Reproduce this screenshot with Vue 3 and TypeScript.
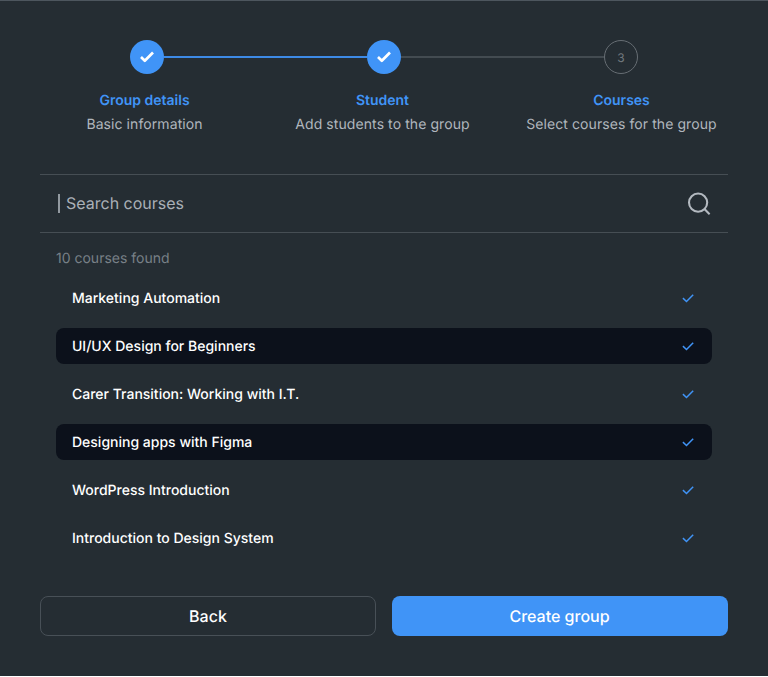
<script setup lang="ts">
import { ref } from 'vue'

interface Step {
  title: string
  description: string
  done: boolean
}

interface Course {
  name: string
  highlighted: boolean
}

const steps: Step[] = [
  { title: 'Group details', description: 'Basic information', done: true },
  { title: 'Student', description: 'Add students to the group', done: true },
  { title: 'Courses', description: 'Select courses for the group', done: false },
]

const courses: Course[] = [
  { name: 'Marketing Automation', highlighted: false },
  { name: 'UI/UX Design for Beginners', highlighted: true },
  { name: 'Carer Transition: Working with I.T.', highlighted: false },
  { name: 'Designing apps with Figma', highlighted: true },
  { name: 'WordPress Introduction', highlighted: false },
  { name: 'Introduction to Design System', highlighted: false },
]

const query = ref('')
</script>

<template>
  <main class="dialog">
    <div class="track">
      <template v-for="(step, i) in steps" :key="step.title">
        <span v-if="i > 0" class="line" :class="{ active: i === 1 }"></span>
        <span class="dot" :class="{ done: step.done }">
          <svg v-if="step.done" width="18" height="18" viewBox="0 0 18 18" fill="none">
            <path d="M3 9.1 6.8 12.7 15 4.5" stroke="#fff" stroke-width="2.7" stroke-linejoin="round" />
          </svg>
          <template v-else>{{ i + 1 }}</template>
        </span>
      </template>
    </div>

    <div class="captions">
      <div v-for="step in steps" :key="step.title" class="caption">
        <strong>{{ step.title }}</strong>
        <span>{{ step.description }}</span>
      </div>
    </div>

    <label class="search">
      <span class="caret"></span>
      <input v-model="query" type="text" placeholder="Search courses" />
      <svg width="24" height="24" viewBox="0 0 24 24" fill="none" stroke="#b3b9c0" stroke-width="2.1">
        <circle cx="11.1" cy="10.6" r="9.1" />
        <path d="M17.2 16.8 22.6 22.2" />
      </svg>
    </label>

    <p class="count">10 courses found</p>

    <ul class="courses">
      <li v-for="course in courses" :key="course.name" :class="{ highlighted: course.highlighted }">
        <span>{{ course.name }}</span>
        <svg width="16" height="16" viewBox="0 0 16 16" fill="none">
          <path d="M2.9 8.1 6.5 11.5 13.2 4.7" stroke="#4094f7" stroke-width="1.5" />
        </svg>
      </li>
    </ul>

    <div class="actions">
      <button type="button" class="back">Back</button>
      <button type="button" class="create">Create group</button>
    </div>
  </main>
</template>

<style>
body {
  background: #fff;
}
</style>

<style scoped>
.dialog {
  box-sizing: border-box;
  height: 676px;
  padding: 39px 40px 0;
  border-top: 1px solid #4d565e;
  background: #252d33;
  color: #fff;
  font-family: Inter, sans-serif;
  font-size: 14px;
  text-rendering: geometricPrecision;
}

.track {
  display: flex;
  align-items: center;
  height: 34px;
  padding: 0 90px;
}

.line {
  flex: 1;
  height: 2px;
  background: #434b51;
}

.line.active {
  background: #3d8ae6;
}

.dot {
  box-sizing: border-box;
  display: flex;
  align-items: center;
  justify-content: center;
  width: 34px;
  height: 34px;
  border: 1px solid #676e74;
  border-radius: 50%;
  color: #70777d;
  font-size: 12px;
}

.dot.done {
  border: 0;
  background: #4094f7;
}

.captions {
  display: grid;
  grid-template-columns: 239px 237px 241px;
  margin: 15px -15px 0;
  text-align: center;
  line-height: 24px;
}

.caption {
  display: flex;
  flex-direction: column;
}

.caption strong {
  color: #4094f7;
  font-weight: 600;
}

.caption span {
  color: #b0b6bd;
  letter-spacing: 0.08px;
}

.search {
  box-sizing: border-box;
  display: flex;
  align-items: center;
  height: 59px;
  margin-top: 37px;
  padding: 0 17px 0 18px;
  border-top: 1px solid #464e54;
  border-bottom: 1px solid #464e54;
}

.caret {
  width: 2px;
  height: 19px;
  margin-right: 6px;
  background: #9299a0;
}

input {
  flex: 1;
  padding: 0 0 2px;
  border: 0;
  outline: 0;
  background: transparent;
  color: #fff;
  font: 16px Inter, sans-serif;
  text-rendering: inherit;
}

input::placeholder {
  color: #aab0b7;
  opacity: 1;
}

.count {
  margin: 14px 0 0 16px;
  color: #788087;
  line-height: 24px;
}

.courses {
  display: grid;
  gap: 12px;
  margin: 9px 16px 0;
  padding: 0;
  list-style: none;
}

.courses li {
  display: flex;
  align-items: center;
  justify-content: space-between;
  height: 36px;
  padding: 0 16px;
  border-radius: 8px;
  font-weight: 500;
  line-height: 20px;
}

.courses li span {
  padding-top: 2px;
}

.courses li.highlighted {
  background: #0c111b;
}

.actions {
  display: grid;
  grid-template-columns: 1fr 1fr;
  gap: 16px;
  margin-top: 40px;
}

button {
  box-sizing: border-box;
  height: 40px;
  padding: 0;
  border: 1px solid #485057;
  border-radius: 8px;
  background: transparent;
  color: #fff;
  font: 500 16px Inter, sans-serif;
  text-rendering: inherit;
}

.create {
  padding-right: 1px;
  border: 0;
  background: #4094f7;
}
</style>
